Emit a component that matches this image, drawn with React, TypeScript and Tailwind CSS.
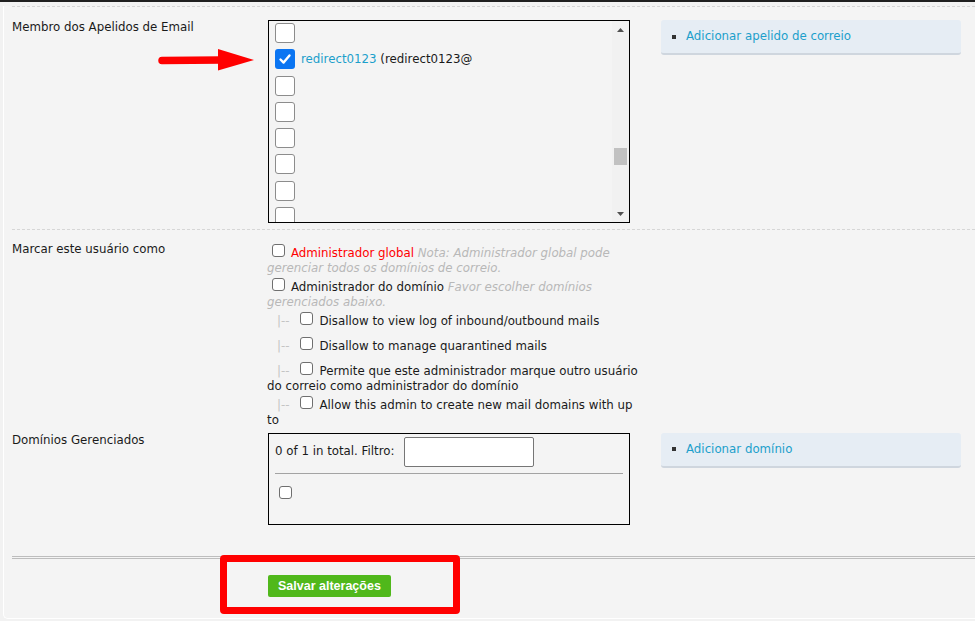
import React from "react";

function SmallCheck() {
  return (
    <span className="-mt-[2px] inline-block h-[13px] w-[13px] rounded-[3px] border border-[#6f6f6f] bg-white align-baseline" />
  );
}

function BigCheck({ checked = false }: { checked?: boolean }) {
  if (checked) {
    return (
      <span className="flex h-[20px] w-[20px] shrink-0 items-center justify-center rounded-[3px] bg-[#0b75f2]">
        <svg width="14" height="14" viewBox="0 0 14 14">
          <path d="M2.5 7.5 L5.6 10.6 L11.5 3.4" fill="none" stroke="#fff" strokeWidth="2.4" strokeLinecap="round" strokeLinejoin="round" />
        </svg>
      </span>
    );
  }
  return <span className="block h-[20px] w-[20px] shrink-0 rounded-[3px] border-[1.5px] border-[#8c8c8c] bg-white" />;
}

function SideLink({ text }: { text: string }) {
  return (
    <div className="ml-[31px] flex h-[35px] w-[300px] items-center rounded-[3px] border-b-2 border-[#cfd6de] bg-[#e6edf4] pl-[11px]">
      <span className="mr-[10px] inline-block h-[4px] w-[4px] bg-[#333]" />
      <span className="text-[#1c9fcb]">{text}</span>
    </div>
  );
}

function Tree() {
  return <span className="ml-[10px] mr-[10px] text-[#c4c4c4]">|--</span>;
}

export default function App() {
  const rows = [false, true, false, false, false, false, false, false];

  return (
    <div className="relative h-[621px] w-[975px] overflow-hidden border-t-2 border-[#1f1f1f] bg-[#f2f2f2] font-['DejaVu_Sans',sans-serif] text-[11.8px] leading-[15px] text-[#1a1a1a]">
      <div className="ml-[3px] h-[613px] rounded-bl-[5px] border-b border-l border-white bg-[#f4f4f4] pl-[8px]">
        {/* aliases */}
        <div className="mt-[4px] flex items-start border-t border-dashed border-[#d6d6d6] pb-[6px] pt-[13px]">
          <div className="w-[256px]">Membro dos Apelidos de Email</div>
          <div className="flex h-[203px] w-[362px] border border-black">
            <div className="flex-1 overflow-hidden pl-[6px] pt-[2px]">
              {rows.map((checked, i) => (
                <div key={i} className="h-[26.25px]">
                  <div className="flex h-[20px] items-center">
                    <BigCheck checked={checked} />
                    {checked && (
                      <span className="ml-[6px] whitespace-nowrap">
                        <span className="text-[#1c9fcb]">redirect0123</span> (redirect0123@
                      </span>
                    )}
                  </div>
                </div>
              ))}
            </div>
            <div className="flex w-[17px] flex-col bg-[#f1f1f1]">
              <div className="flex h-[17px] items-center justify-center">
                <svg width="7" height="4" viewBox="0 0 7 4">
                  <path d="M0 4 L3.5 0 L7 4 Z" fill="#505050" />
                </svg>
              </div>
              <div className="flex-1">
                <div className="mx-[2px] mt-[110px] h-[17px] bg-[#c1c1c1]" />
              </div>
              <div className="flex h-[17px] items-center justify-center">
                <svg width="7" height="4" viewBox="0 0 7 4">
                  <path d="M0 0 L3.5 4 L7 0 Z" fill="#505050" />
                </svg>
              </div>
            </div>
          </div>
          <SideLink text="Adicionar apelido de correio" />
        </div>

        {/* roles */}
        <div className="flex items-start border-t border-dashed border-[#d6d6d6] pb-[5.3px] pt-[12px]">
          <div className="w-[255px]">Marcar este usuário como</div>
          <div className="mt-[4px] whitespace-nowrap">
            <div>
              <span className="ml-[5px]" />
              <SmallCheck />
              <span className="ml-[6px] text-[#ff0000]">Administrador global</span>{" "}
              <span className="italic text-[#b8b8b8]">Nota: Administrador global pode</span>
              <br />
              <span className="italic text-[#b8b8b8]">gerenciar todos os domínios de correio.</span>
            </div>
            <div className="mt-[4px]">
              <span className="ml-[5px]" />
              <SmallCheck />
              <span className="ml-[6px]">Administrador do domínio</span>{" "}
              <span className="italic text-[#b8b8b8]">Favor escolher domínios</span>
              <br />
              <span className="italic text-[#b8b8b8]">gerenciados abaixo.</span>
            </div>
            <div className="mt-[4.4px]">
              <Tree />
              <SmallCheck />
              <span className="ml-[7px]">Disallow to view log of inbound/outbound mails</span>
            </div>
            <div className="mt-[9.3px]">
              <Tree />
              <SmallCheck />
              <span className="ml-[7px]">Disallow to manage quarantined mails</span>
            </div>
            <div className="mt-[10.3px]">
              <Tree />
              <SmallCheck />
              <span className="ml-[7px]">Permite que este administrador marque outro usuário</span>
              <br />
              do correio como administrador do domínio
            </div>
            <div className="mt-[3.7px]">
              <Tree />
              <SmallCheck />
              <span className="ml-[7px]">Allow this admin to create new mail domains with up</span>
              <br />
              to
            </div>
          </div>
        </div>

        {/* domains */}
        <div className="flex items-start pb-[31px]">
          <div className="w-[256px]">Domínios Gerenciados</div>
          <div className="h-[92px] w-[362px] border border-black px-[6px] pt-[3px]">
            <div className="flex items-center">
              <span className="w-[123px] whitespace-nowrap">0 of 1 in total. Filtro:</span>
              <span className="ml-[6px] block h-[30px] w-[130px] rounded-[2px] border border-[#767676] bg-white" />
            </div>
            <div className="mt-[6px] border-t border-[#a3a3a3]" />
            <div className="ml-[4px] mt-[12px] h-[13px] w-[13px] rounded-[3px] border border-[#6f6f6f] bg-white" />
          </div>
          <SideLink text="Adicionar domínio" />
        </div>

        {/* submit */}
        <div className="border-t-[3px] border-double border-[#bdbdbd] pl-[256px] pt-[16px]">
          <button className="h-[22px] rounded-[2px] bg-[#50b81b] px-[10px] font-['Liberation_Sans',sans-serif] text-[12.5px] font-bold leading-[22px] text-white">
            Salvar alterações
          </button>
        </div>
      </div>

      {/* annotations */}
      <svg className="absolute left-[150px] top-[43px]" width="110" height="35" viewBox="150 45 110 35">
        <path d="M162 60.5 L222 60" stroke="#ff0000" strokeWidth="7.5" strokeLinecap="round" />
        <polygon points="218,49 254,60 218,70.5" fill="#ff0000" />
      </svg>
      <div className="absolute left-[220px] top-[553px] h-[59px] w-[240px] rounded-[4px] border-[7px] border-[#ff0000]" />
    </div>
  );
}
